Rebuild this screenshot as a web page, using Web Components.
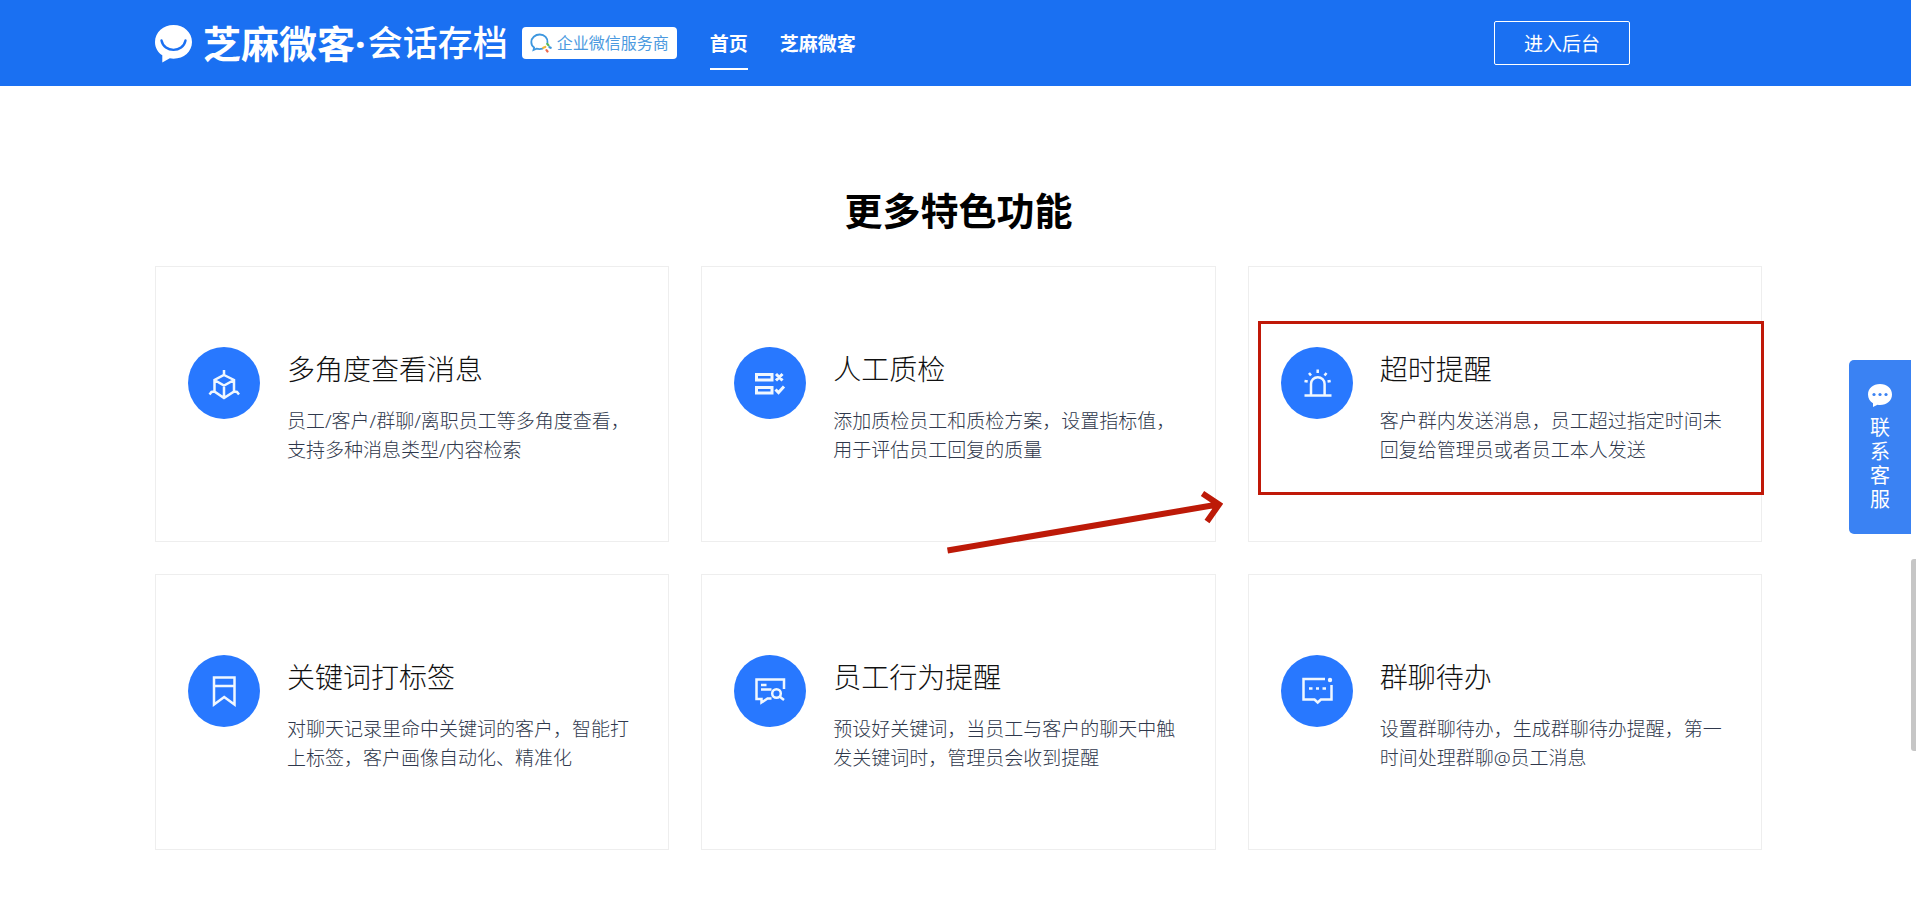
<!DOCTYPE html>
<html lang="zh-CN">
<head>
<meta charset="utf-8">
<title>芝麻微客·会话存档</title>
<style>
body { margin: 0; background: #fff; font-family: "Noto Sans", "Noto Sans CJK SC", sans-serif; }
</style>
</head>
<body>
<archive-page></archive-page>
<script>
const define = (name, html) => customElements.define(name, class extends HTMLElement {
  constructor() {
    super();
    this.attachShadow({ mode: "open" }).innerHTML = typeof html === "function" ? html(this) : html;
  }
});

const icons = {
  cube: '<path d="M36 23v5M36 28l10 5v11.500L36 51l-9.500-6.500V33zM26.500 33L36 38.500 46 33M36 38.500V51M26.500 44.500l-3 .5-2 2.500M46 44.500l3 .5 2 2.500"/>',
  check: '<path stroke-width="3" d="M22.500 27.500h15.500v5.500H22.500zM22.500 40.500h15.500v5.500H22.500zM42 27l6.500 6.500M48.500 27L42 33.500M41.500 42.500l3 3 5.500-6"/>',
  alarm: '<path d="M23.500 48.500h27M30 48V37a6.800 6.800 0 0 1 13.600 0v11M36.700 22.500V26M28 26l2 2.600M45.500 26l-2 2.600M23.500 34l3.200.6M49.700 34l-3.200.6"/>',
  bookmark: '<path d="M26 22.500h20.500V49.500L36.200 42 26 49.500zM26 31h20.500"/>',
  search: '<path d="M50 34V24.500H22.500V44H27.500v3.500l6-4h4M27 30h5.500M27 34.500h10.500"/><circle cx="42.500" cy="38.500" r="4.300"/><path d="M45.500 41.500l4.500 3.500"/>',
  todo: '<path d="M44 24H22.500v20.500h11l3.200 3 3.200-3H50.500V30M28 33.500h3.500M35 33.500h3M41.500 33.500H45"/><circle cx="49" cy="25" r="2.200" fill="#f0f7ff" stroke="none"/>'
};

define("brand-logo", `
<style>
  :host { display: flex; align-items: center; color: #fff; line-height: 40px; white-space: nowrap; }
  svg { display: block; width: 37px; height: 39px; margin-right: 11px; }
  .name { font-size: 38px; font-weight: 700; }
  .product { font-size: 35px; font-weight: 500; margin-left: 2px; }
</style>
<svg viewBox="0 0 37 39" aria-hidden="true">
  <path fill="#fff" d="M18.500 1C8.500 1 0 8 0 18c0 6 3 10.500 7.300 13.300V38.500l7.500-4.200c1.200.3 2.400.4 3.700.4C29 34.700 37 27.500 37 18S29 1 18.500 1z"/>
  <path fill="none" stroke="#1a70f2" stroke-width="2.400" stroke-linecap="round" d="M6.500 16.500C9 29 28 29 30.500 16.500"/>
</svg>
<span class="name">芝麻微客·</span><span class="product">会话存档</span>`);

define("partner-badge", `
<style>
  :host { display: flex; align-items: center; box-sizing: border-box; height: 32px; padding: 0 8px;
    border-radius: 4px; background: #fff; color: #4c9ae0; font-size: 16px; line-height: 24px; white-space: nowrap; }
  svg { width: 22px; height: 20px; margin-right: 5px; flex: none; }
</style>
<svg viewBox="0 0 22 20" fill="none" stroke-linecap="round" aria-hidden="true">
  <path stroke="#3d97df" stroke-width="1.800" d="M17.500 9.500C18 5 14.500 1.500 9.800 1.500S1.300 5 1.300 9c0 2.500 1.200 4.500 2.800 5.600L3.500 17l3-1.300c2 .6 4 .6 6 0"/>
  <path stroke="#57b85a" stroke-width="2.200" d="M17.200 10.800l1.300 1.600"/>
  <path stroke="#3d97df" stroke-width="2.200" d="M19.500 14.200l1.200.6"/>
  <path stroke="#ee6a4d" stroke-width="2.200" d="M16.500 17.200l1 1.300"/>
  <path stroke="#f2b934" stroke-width="2.200" d="M13.300 14.800l2-.8"/>
</svg>
<span><slot></slot></span>`);

define("site-header", `
<style>
  :host { display: flex; align-items: center; height: 86px; padding: 0 281px 0 155px; background: #1a70f2; color: #fff; }
  partner-badge { margin-left: 14px; }
  nav { display: flex; gap: 32px; margin: 0 32px 0 33px; }
  a { box-sizing: border-box; height: 54px; padding-top: 14px; border-bottom: 2px solid transparent; color: #fff;
    font-size: 19px; font-weight: 700; line-height: 28px; text-decoration: none; white-space: nowrap; }
  a[aria-current] { border-color: #fff; }
  button { flex: none; width: 136px; height: 44px; margin-left: auto; padding: 2px 0 0; border: 1px solid #fff; border-radius: 2px;
    background: none; color: #fff; font: 19px/28px "Noto Sans", "Noto Sans CJK SC", sans-serif; cursor: pointer; }
</style>
<brand-logo></brand-logo>
<partner-badge>企业微信服务商</partner-badge>
<nav><a href="#" aria-current="page">首页</a><a href="#">芝麻微客</a></nav>
<button type="button">进入后台</button>`);

define("feature-card", el => `
<style>
  :host { display: flex; position: relative; box-sizing: border-box; gap: 27px; min-height: 276px;
    padding: 80px 32px 76px; border: 1px solid #eee; }
  svg { flex: none; width: 72px; height: 72px; }
  h3 { margin: 0; color: #111; font-size: 28px; font-weight: 300; line-height: 44px; }
  p { margin: 16px 0 0; color: #2f384c; font-size: 19px; font-weight: 300; line-height: 29px; }
</style>
<svg viewBox="0 0 72 72" fill="none" stroke="#f0f7ff" stroke-width="2.500" aria-hidden="true">
  <circle cx="36" cy="36" r="36" fill="#2878ff" stroke="none"/>${icons[el.getAttribute("icon")]}
</svg>
<div><h3><slot name="title"></slot></h3><p><slot></slot></p></div>
<slot name="mark"></slot>`);

define("mark-frame", `
<style>
  :host { position: absolute; top: 54px; left: 9px; right: -3px; bottom: 46px; border: 3px solid #c01808; pointer-events: none; }
</style>`);

define("mark-arrow", `
<style>
  :host { position: absolute; right: -8px; bottom: -13px; width: 276px; height: 64px; z-index: 1; pointer-events: none; }
  svg { display: block; }
</style>
<svg width="276" height="64" viewBox="0 0 276 64" fill="none" stroke="#bd1a08" stroke-width="6" aria-hidden="true">
  <path d="M.5 60.500L271 14.500M255.500 3.500L272 14.500 260 31.500"/>
</svg>`);

define("feature-section", `
<style>
  :host { display: block; padding: 100px 149px 47px 155px; }
  h2 { margin: 0 0 32px; color: #000; font-size: 38px; font-weight: 700; line-height: 48px; text-align: center; }
  .grid { display: grid; grid-template-columns: repeat(3, 1fr); gap: 32px; }
</style>
<h2>更多特色功能</h2>
<div class="grid">
  <feature-card icon="cube"><span slot="title">多角度查看消息</span>员工/客户/群聊/离职员工等多角度查看，支持多种消息类型/内容检索</feature-card>
  <feature-card icon="check"><span slot="title">人工质检</span>添加质检员工和质检方案，设置指标值，用于评估员工回复的质量<mark-arrow slot="mark"></mark-arrow></feature-card>
  <feature-card icon="alarm"><span slot="title">超时提醒</span>客户群内发送消息，员工超过指定时间未回复给管理员或者员工本人发送<mark-frame slot="mark"></mark-frame></feature-card>
  <feature-card icon="bookmark"><span slot="title">关键词打标签</span>对聊天记录里命中关键词的客户，智能打上标签，客户画像自动化、精准化</feature-card>
  <feature-card icon="search"><span slot="title">员工行为提醒</span>预设好关键词，当员工与客户的聊天中触发关键词时，管理员会收到提醒</feature-card>
  <feature-card icon="todo"><span slot="title">群聊待办</span>设置群聊待办，生成群聊待办提醒，第一时间处理群聊@员工消息</feature-card>
</div>`);

define("contact-tab", `
<style>
  :host { position: fixed; top: 360px; right: 5px; z-index: 2; }
  button { display: flex; flex-direction: column; align-items: center; gap: 8px; width: 62px; height: 174px; padding: 24px 0 0;
    border: 0; border-radius: 5px 0 0 5px; background: #3a82f3; color: #fff;
    font: 20px/24px "Noto Sans", "Noto Sans CJK SC", sans-serif; cursor: pointer; }
  svg { flex: none; width: 24px; height: 24px; }
  span { width: 20px; }
</style>
<button type="button">
  <svg viewBox="0 0 24 24" aria-hidden="true">
    <path fill="#fff" d="M12 0C5 0 0 4.500 0 10.500c0 4 2 7 5 8.700V23l4.500-2.300c1 .2 1.700.3 2.500.3 7 0 12-4.500 12-10.500S19 0 12 0z"/>
    <g fill="#3a82f3"><circle cx="6" cy="10.500" r="1.600"/><circle cx="12" cy="10.500" r="1.600"/><circle cx="18" cy="10.500" r="1.600"/></g>
  </svg>
  <span>联系客服</span>
</button>`);

define("scroll-rail", `
<style>
  :host { display: flex; flex-direction: column; position: sticky; top: 0; height: 100vh; background: #fff; }
  .before { flex: 559; }
  .thumb { flex: 192; border-radius: 3px 0 0 3px; background: #c6c6c6; }
  .after { flex: 146; }
</style>
<div class="before"></div><div class="thumb"></div><div class="after"></div>`);

define("archive-page", `
<style>
  :host { display: grid; grid-template-columns: 1fr 5px; min-height: 100vh; }
</style>
<main>
  <site-header></site-header>
  <feature-section></feature-section>
</main>
<scroll-rail></scroll-rail>
<contact-tab></contact-tab>`);
</script>
</body>
</html>
